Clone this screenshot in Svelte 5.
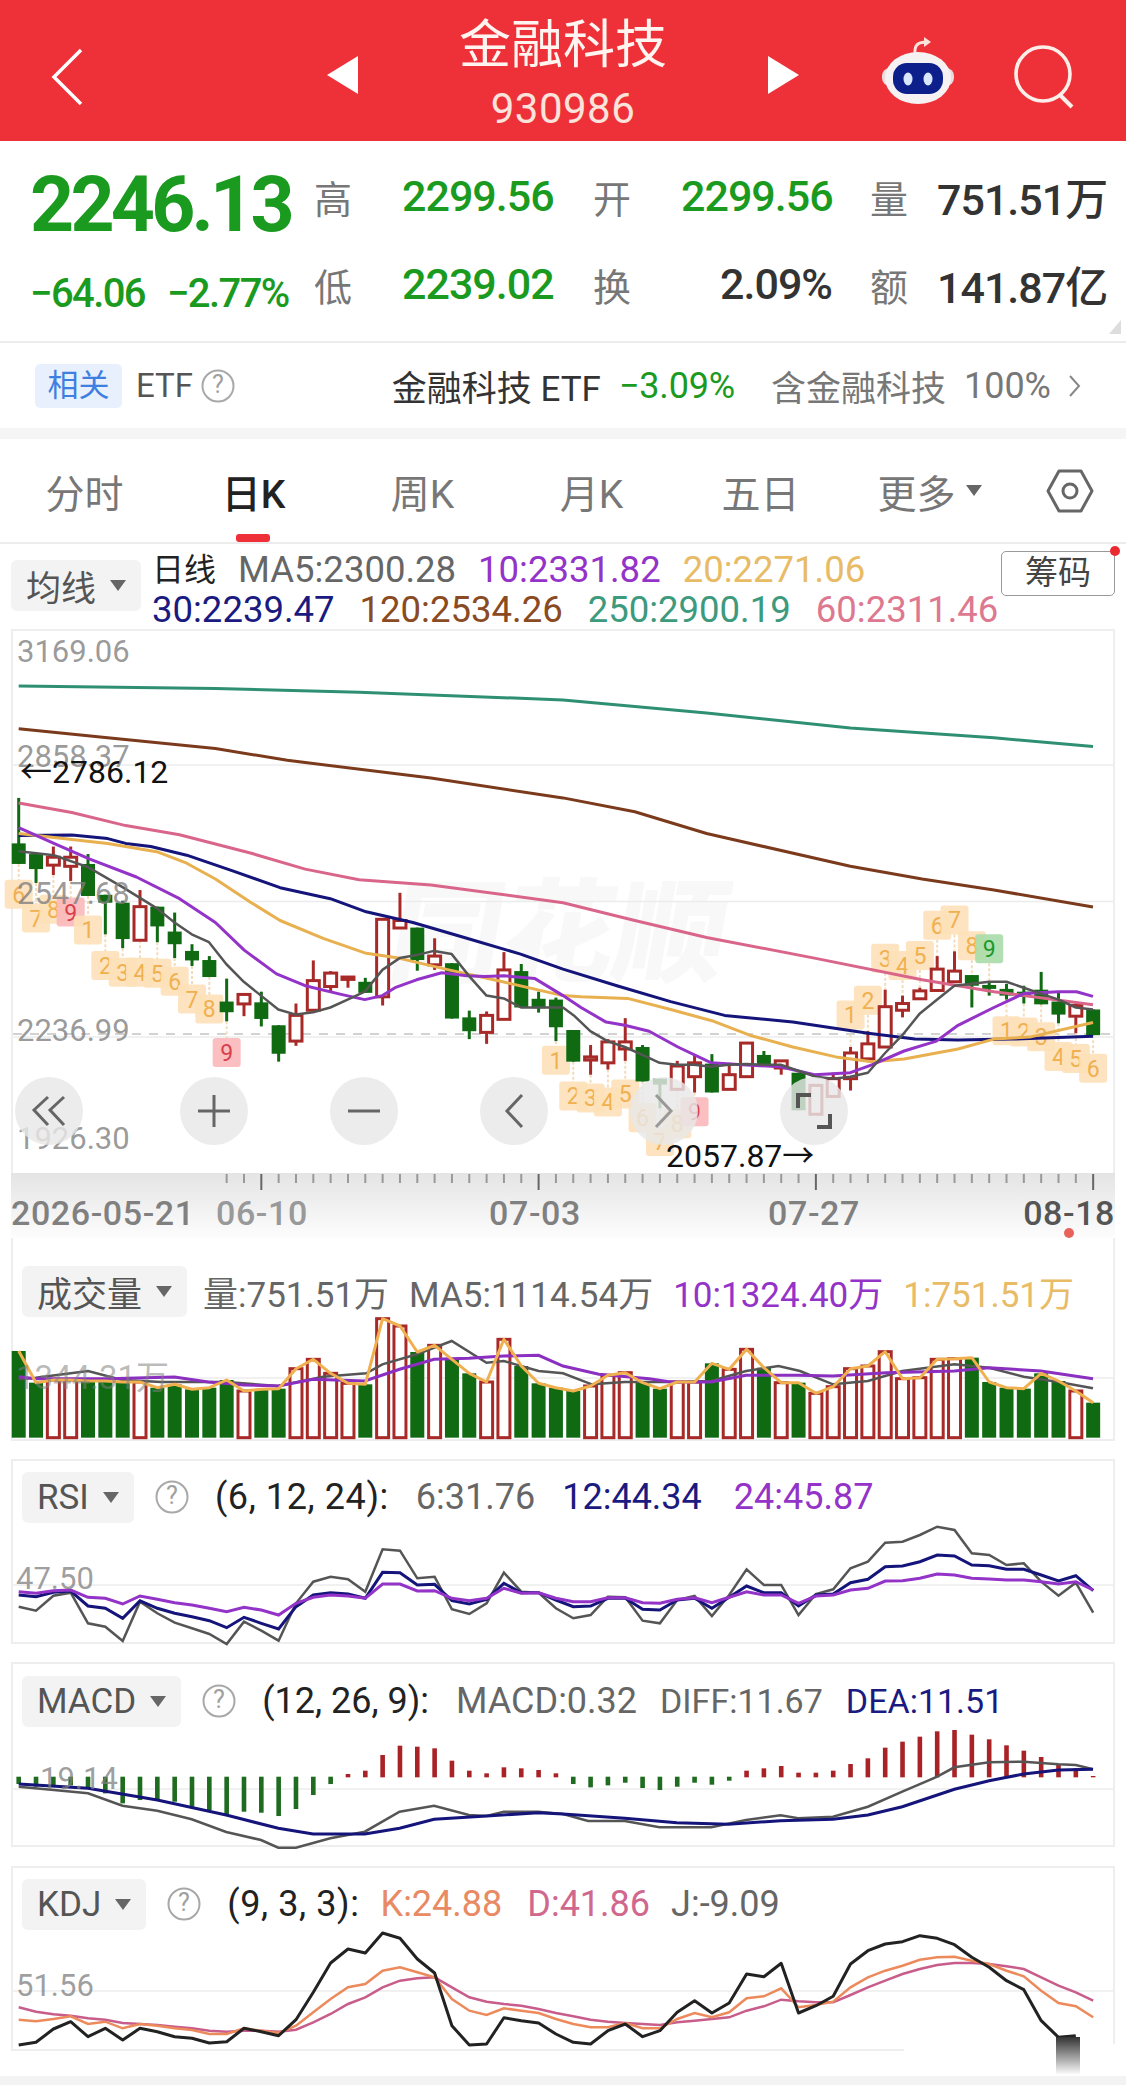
<script>
	// candle: [wick top, body top, body bottom, wick bottom, colour], zoom-crop y units
	const candles = [
		[455, 570, 622, 622, 'g'], [595, 597, 635, 670, 'g'], [578, 605, 625, 650, 'r'], [578, 605, 628, 665, 'r'],
		[597, 622, 703, 703, 'g'], [700, 700, 720, 800, 'g'], [715, 720, 812, 835, 'g'], [688, 730, 815, 815, 'r'],
		[730, 730, 780, 820, 'g'], [745, 793, 825, 860, 'g'], [825, 842, 866, 880, 'g'], [855, 865, 908, 908, 'g'],
		[912, 970, 997, 1020, 'g'], [952, 952, 976, 1007, 'r'], [945, 972, 1014, 1033, 'g'], [1030, 1030, 1102, 1122, 'g'],
		[975, 1005, 1070, 1082, 'r'], [866, 917, 992, 992, 'r'], [893, 898, 932, 945, 'r'], [908, 908, 914, 935, 'r'],
		[910, 920, 948, 948, 'g'], [762, 762, 958, 980, 'r'], [695, 765, 784, 784, 'r'], [783, 783, 865, 892, 'g'],
		[810, 855, 877, 890, 'r'], [873, 873, 1013, 1013, 'g'], [993, 1010, 1045, 1065, 'g'], [995, 1005, 1048, 1077, 'r'],
		[845, 890, 1015, 1015, 'r'], [875, 893, 985, 985, 'g'], [945, 963, 987, 998, 'g'], [960, 965, 1035, 1070, 'g'],
		[1042, 1042, 1122, 1122, 'g'], [1080, 1110, 1118, 1155, 'r'], [1065, 1072, 1125, 1142, 'r'], [1012, 1072, 1090, 1120, 'r'],
		[1080, 1085, 1172, 1172, 'g'], [1165, 1165, 1180, 1240, 'g'], [1120, 1133, 1192, 1192, 'r'], [1105, 1125, 1160, 1200, 'r'],
		[1103, 1127, 1200, 1200, 'g'], [1125, 1155, 1192, 1192, 'r'], [1075, 1075, 1160, 1160, 'r'], [1095, 1105, 1128, 1128, 'g'],
		[1120, 1120, 1138, 1155, 'r'], [1150, 1150, 1245, 1245, 'g'], [1182, 1182, 1255, 1255, 'r'], [1150, 1165, 1210, 1210, 'r'],
		[1085, 1100, 1165, 1195, 'r'], [1045, 1077, 1115, 1115, 'r'], [940, 983, 1085, 1085, 'r'], [955, 975, 992, 1010, 'r'],
		[935, 943, 963, 963, 'r'], [855, 888, 942, 942, 'r'], [843, 893, 920, 920, 'r'], [903, 903, 930, 985, 'g'],
		[920, 928, 938, 955, 'g'], [925, 938, 955, 965, 'g'], [930, 945, 958, 975, 'g'], [895, 940, 977, 977, 'g'],
		[945, 970, 1003, 1025, 'g'], [980, 980, 1007, 1050, 'r'], [990, 990, 1055, 1055, 'g']
	];

	const cx = (i) => 18.7 + 17.33 * i;
	const my = (v) => 620 + v / 2.529;
	const R = 1568; // right-hand crop offset

	const ma = [
		{ c: '#2f8f72', w: 3, p: [[52,172],[600,178],[1000,188],[1568,207],[R+400,240],[R+800,278],[R+1200,303],[R+1476,325]] },
		{ c: '#7c3a1c', w: 3, p: [[52,280],[300,303],[600,330],[800,360],[1200,405],[1568,455],[R+200,490],[R+400,545],[R+800,628],[R+1000,660],[R+1200,688],[R+1476,731]] },
		{ c: '#d9668a', w: 3, p: [[52,468],[200,492],[350,525],[500,548],[700,595],[850,635],[1000,662],[1200,675],[1568,720],[R+200,765],[R+400,808],[R+700,860],[R+1000,915],[R+1200,945],[R+1476,978]] },
		{ c: '#14147a', w: 3, p: [[52,550],[200,549],[300,558],[350,570],[420,578],[520,600],[650,640],[780,682],[920,710],[1020,743],[1150,770],[1300,810],[1450,850],[1568,888],[R+150,930],[R+300,970],[R+450,1005],[R+640,1022],[R+850,1050],[R+980,1065],[R+1100,1067],[R+1250,1065],[R+1476,1058]] },
		{ c: '#e8b04f', w: 3, p: [[52,545],[200,560],[300,570],[440,592],[520,620],[600,660],[700,720],[780,765],[900,810],[1020,848],[1110,860],[1250,890],[1400,920],[1568,955],[R+50,958],[R+180,962],[R+300,990],[R+420,1020],[R+520,1055],[R+640,1085],[R+760,1110],[R+860,1122],[R+950,1115],[R+1100,1090],[R+1200,1065],[R+1300,1060],[R+1476,1023]] },
		{ c: '#9333c8', w: 3, p: [[52,530],[150,570],[250,610],[380,655],[500,710],[600,770],[680,840],[770,900],[850,930],[950,952],[1016,965],[1065,955],[1100,935],[1160,915],[1230,897],[1300,905],[1350,907],[1403,905],[1490,912],[1568,955],[R+50,985],[R+120,1022],[R+172,1030],[R+240,1045],[R+320,1085],[R+413,1125],[R+500,1130],[R+606,1135],[R+700,1155],[R+800,1150],[R+860,1130],[R+950,1095],[R+1040,1070],[R+1100,1030],[R+1200,985],[R+1283,950],[R+1380,945],[R+1430,945],[R+1476,957]] },
		{ c: '#555555', w: 2.5, p: [[52,590],[150,600],[245,630],[340,680],[438,735],[486,770],[534,800],[582,820],[630,875],[679,920],[727,955],[775,990],[824,1003],[872,997],[920,985],[968,965],[1016,945],[1065,890],[1113,860],[1161,852],[1209,842],[1258,850],[1306,905],[1355,955],[1403,962],[1451,985],[1499,985],[1568,985],[R+30,1005],[R+76,1045],[R+124,1070],[R+172,1085],[R+221,1105],[R+269,1125],[R+317,1130],[R+365,1130],[R+413,1135],[R+461,1130],[R+510,1128],[R+558,1130],[R+606,1130],[R+655,1145],[R+704,1160],[R+752,1165],[R+800,1160],[R+849,1150],[R+897,1100],[R+945,1055],[R+994,1000],[R+1042,965],[R+1090,930],[R+1139,925],[R+1187,920],[R+1235,920],[R+1283,935],[R+1331,950],[R+1380,965],[R+1428,985],[R+1476,990]] }
	];

	// TD sequence tags: [candle, crop y, number, kind]
	const tags = [
		[0,700,'6'],[1,760,'7'],[2,738,'8'],[3,745,'9','red'],[4,790,'1'],[5,880,'2'],[6,897,'3'],[7,897,'4'],[8,900,'5'],[9,920,'6'],[10,965,'7'],[11,990,'8'],[12,1100,'9','red'],
		[31,1120,'1'],[32,1210,'2'],[33,1215,'3'],[34,1225,'4'],[35,1205,'5'],[36,1265,'6'],[37,1325,'7'],[38,1280,'8'],[39,1250,'9','red'],
		[48,1005,'1'],[49,968,'2'],[50,862,'3'],[51,880,'4'],[52,855,'5'],[53,778,'6'],[54,765,'7'],[55,830,'8'],[56,838,'9','grn'],
		[57,1045,'1'],[58,1048,'2'],[59,1060,'3'],[60,1110,'4'],[61,1115,'5'],[62,1140,'6']
	];

	const vol = [285,380,372,372,375,375,378,378,395,385,400,395,372,405,400,398,338,310,352,382,385,188,210,288,268,310,352,378,250,330,382,395,405,390,358,350,380,398,378,378,322,340,280,335,380,380,412,392,338,330,287,368,365,310,308,305,378,395,398,352,375,405,440];
	const volGray = [[52,370],[100,365],[245,345],[340,372],[450,378],[630,378],[775,390],[900,362],[1020,352],[1065,325],[1161,295],[1258,255],[1355,320],[1403,315],[1500,345],[1568,352],[R+80,385],[R+172,378],[R+300,378],[R+413,375],[R+510,345],[R+600,330],[R+660,345],[R+752,385],[R+849,375],[R+945,345],[R+1090,325],[R+1187,335],[R+1283,362],[R+1380,378],[R+1476,397]];
	const volPurple = [[52,362],[100,368],[300,368],[486,363],[580,378],[680,387],[775,390],[872,370],[1016,375],[1113,340],[1209,310],[1306,307],[1403,300],[1500,298],[1568,330],[R+100,355],[R+240,368],[R+300,378],[R+413,378],[R+510,358],[R+655,358],[R+752,360],[R+900,350],[R+1090,345],[R+1187,335],[R+1331,345],[R+1476,368]];

	const rsi6 = [1040,1052,1007,998,1090,1100,1143,1025,1060,1088,1105,1122,1152,1085,1112,1142,1030,965,950,958,995,868,872,955,950,1048,1062,1030,938,995,998,1045,1075,1065,1010,1012,1082,1090,1020,1008,1068,1005,928,975,975,1065,1002,988,925,905,848,845,825,800,810,880,885,915,910,965,1007,968,1058];
	const rsi12 = [1005,1010,997,993,1038,1045,1075,1022,1045,1060,1070,1082,1103,1072,1090,1107,1040,1005,998,1002,1015,937,938,975,973,1022,1032,1018,970,998,998,1020,1040,1038,1015,1015,1048,1050,1020,1015,1045,1012,978,998,998,1038,1005,1002,968,958,920,918,905,885,888,915,917,928,928,945,963,947,992];
	const rsi24 = [995,1000,992,990,1012,1015,1032,1008,1018,1028,1035,1045,1055,1042,1050,1065,1030,1012,1005,1008,1015,972,972,993,992,1015,1022,1015,985,1000,998,1015,1025,1025,1013,1013,1028,1030,1018,1013,1028,1012,995,1005,1005,1030,1008,1005,990,985,963,962,955,942,945,955,957,960,960,965,972,965,990];

	const macdBars = [372,380,378,376,385,400,430,420,420,425,440,450,462,455,458,468,447,405,372,342,332,285,257,260,265,302,332,340,322,325,330,340,372,382,376,368,384,390,380,368,374,362,332,325,318,338,338,332,312,295,263,245,230,214,210,224,238,256,272,291,314,325,348];
	const diff = [[52,380],[150,390],[245,400],[341,437],[438,452],[534,478],[630,516],[727,540],[775,563],[824,563],[920,535],[1016,515],[1113,455],[1209,437],[1306,465],[1355,468],[1403,455],[1499,455],[1568,462],[R+70,483],[R+172,483],[R+269,502],[R+413,502],[R+510,480],[R+606,466],[R+655,475],[R+752,470],[R+849,440],[R+945,395],[R+1042,350],[R+1090,322],[R+1187,307],[R+1283,305],[R+1380,313],[R+1428,315],[R+1476,328]];
	const dea = [[52,372],[245,385],[438,420],[630,465],[775,505],[872,522],[1016,522],[1113,505],[1209,478],[1355,468],[1499,458],[1568,462],[R+172,475],[R+317,488],[R+461,493],[R+606,482],[R+752,478],[R+849,465],[R+945,440],[R+1090,388],[R+1187,362],[R+1283,342],[R+1380,330],[R+1476,328]];

	const kdjJ = [1158,1150,1110,1088,1133,1108,1143,1108,1118,1133,1138,1152,1148,1108,1118,1130,1082,1000,912,870,882,822,838,900,942,1100,1158,1155,1076,1085,1092,1125,1150,1155,1115,1095,1133,1115,1060,1025,1062,1032,945,953,913,1062,1040,1012,915,875,855,848,830,838,857,895,925,965,992,1085,1135,1130];
	const kdjK = [1082,1087,1080,1072,1095,1088,1108,1095,1100,1108,1113,1125,1125,1108,1115,1122,1100,1060,1020,985,975,935,925,940,955,1020,1055,1068,1048,1055,1062,1080,1095,1105,1105,1092,1108,1108,1080,1062,1075,1060,1018,1012,988,1045,1038,1028,985,955,935,920,902,895,893,905,915,935,952,995,1032,1042,1075];
	const kdjD = [1045,1058,1066,1070,1078,1082,1092,1095,1098,1103,1108,1115,1118,1115,1115,1118,1112,1090,1065,1035,1015,985,965,958,955,985,1015,1028,1035,1040,1050,1062,1072,1082,1088,1092,1095,1098,1090,1085,1080,1075,1055,1042,1022,1027,1030,1030,1008,985,965,945,930,918,912,912,915,922,930,955,980,1000,1025];

	// crop [x, y] pairs to svg points
	const pts = (p, top, sy) => p.map(([x, y]) => `${(x / 2.785).toFixed(1)},${(top + y / sy).toFixed(1)}`).join(' ');
	// one value per candle to svg points
	const ser = (a, top) => a.map((v, i) => `${cx(i).toFixed(1)},${(top + v / 3).toFixed(1)}`).join(' ');

	const ticks = Array.from({ length: 51 }, (_, k) => k + 12);
	const bigTicks = [14, 30, 46, 62];
</script>

{#snippet sel(name)}
	<div class="sel">{name}<i class="caret"></i></div>
{/snippet}

{#snippet help()}
	<svg class="help" width="34" height="34" viewBox="0 0 34 34">
		<circle cx="17" cy="17" r="15.5" fill="none" stroke="#a8a8a8" stroke-width="2" />
		<text x="17" y="24" text-anchor="middle">?</text>
	</svg>
{/snippet}

<div class="app">
	<header class="top">
		<svg class="back" width="34" height="58" viewBox="0 0 34 58"><path d="M31 2 L4 29 L31 56" fill="none" stroke="#fff" stroke-width="3.5" /></svg>
		<div class="mid">
			<svg width="32" height="38" viewBox="0 0 32 38"><path d="M31 0 V38 L0 19 Z" fill="#fff" /></svg>
			<div class="name">
				<div class="title">金融科技</div>
				<div class="code">930986</div>
			</div>
			<svg width="32" height="38" viewBox="0 0 32 38"><path d="M1 0 V38 L32 19 Z" fill="#fff" /></svg>
		</div>
		<div class="tools">
			<svg class="bot" width="74" height="68" viewBox="0 0 74 68">
				<path d="M34 18 C33 8 38 6 46 6" fill="none" stroke="#fbe3dc" stroke-width="3" />
				<path d="M43 1 L50 6 L43 11 Z" fill="#fbe3dc" />
				<rect x="1" y="32" width="72" height="18" rx="8" fill="#e9dcdc" />
				<ellipse cx="37" cy="42" rx="33" ry="26" fill="#f6f1f3" />
				<rect x="12" y="27" width="50" height="31" rx="14" fill="#0c1f8a" />
				<ellipse cx="27" cy="43" rx="4.5" ry="6.5" fill="#d9e6ff" />
				<ellipse cx="47" cy="43" rx="4.5" ry="6.5" fill="#d9e6ff" />
			</svg>
			<svg class="find" width="64" height="66" viewBox="0 0 64 66">
				<circle cx="30" cy="30" r="27" fill="none" stroke="#fdeee9" stroke-width="3.6" />
				<path d="M47 51 L59 63" stroke="#fdeee9" stroke-width="4" />
			</svg>
		</div>
	</header>

	<section class="quote">
		<div class="price">2246.13</div>
		<div class="lab">高</div><div class="val up">2299.56</div>
		<div class="lab">开</div><div class="val up">2299.56</div>
		<div class="lab">量</div><div class="val dk">751.51万</div>
		<div class="chg"><span>−64.06</span><span>−2.77%</span></div>
		<div class="lab">低</div><div class="val up">2239.02</div>
		<div class="lab">换</div><div class="val dk rt">2.09%</div>
		<div class="lab">额</div><div class="val dk">141.87亿</div>
		<i class="corner"></i>
	</section>

	<section class="etf">
		<div class="etf-l">
			<span class="chip">相关</span>
			<span class="etf-t">ETF</span>
			{@render help()}
		</div>
		<div class="etf-r">
			<span class="dk2">金融科技 ETF</span>
			<span class="up">−3.09%</span>
			<span class="gr wide">含金融科技</span>
			<span class="gr pct">100%</span>
			<svg width="12" height="24" viewBox="0 0 12 24"><path d="M1 2 L10 12 L1 22" fill="none" stroke="#888" stroke-width="2" /></svg>
		</div>
	</section>

	<nav class="tabs">
		<div class="tab">分时</div>
		<div class="tab on">日K<i class="bar"></i></div>
		<div class="tab">周K</div>
		<div class="tab">月K</div>
		<div class="tab">五日</div>
		<div class="tab">更多<i class="caret big"></i></div>
		<div class="tab">
			<svg width="48" height="44" viewBox="0 0 48 44">
				<path d="M13 2 H35 L46 22 L35 42 H13 L2 22 Z" fill="none" stroke="#666" stroke-width="3" stroke-linejoin="round" />
				<circle cx="24" cy="22" r="7" fill="none" stroke="#666" stroke-width="3" />
			</svg>
		</div>
	</nav>

	<section class="legend">
		{@render sel('均线')}
		<div class="rows">
			<div class="row">
				<span class="blk">日线</span>
				<span class="c5">MA5:2300.28</span>
				<span class="c10">10:2331.82</span>
				<span class="c20">20:2271.06</span>
			</div>
			<div class="row">
				<span class="c30">30:2239.47</span>
				<span class="c120">120:2534.26</span>
				<span class="c250">250:2900.19</span>
				<span class="c60">60:2311.46</span>
			</div>
		</div>
		<div class="chips-btn">筹码<i class="dot"></i></div>
	</section>

	<div class="kline">
		<svg width="1100" height="542" viewBox="13 633 1100 542">
			<text class="wm" x="385" y="975" transform="skewX(-10) translate(172 0)">同花顺</text>
			<line class="grid" x1="13" x2="1113" y1="767" y2="767" />
			<line class="grid" x1="13" x2="1113" y1="903.5" y2="903.5" />
			<line class="grid" x1="13" x2="1113" y1="1039" y2="1039" />
			<line class="last" x1="13" x2="1113" y1="1036" y2="1036" />

			{#each tags as [i, y, n, kind]}
				{@const c = candles[i]}
				{#if my(y) > my(c[3])}
					<line class="stem" x1={cx(i)} x2={cx(i)} y1={my(c[3])} y2={my(y) - 14} />
				{:else if my(y) < my(c[0])}
					<line class="stem" x1={cx(i)} x2={cx(i)} y1={my(y) + 14} y2={my(c[0])} />
				{/if}
				<rect class="tag {kind ?? ''}" x={cx(i) - 14} y={my(y) - 15} width="28" height="29" rx="3" />
				<text class="tagn {kind ?? ''}" x={cx(i)} y={my(y) + 8} text-anchor="middle">{n}</text>
			{/each}

			{#each candles as [wt, bt, bb, wb, col], i}
				<line class="wick {col}" x1={cx(i)} x2={cx(i)} y1={my(wt)} y2={my(wb)} />
				{#if col === 'g'}
					<rect class="bd g" x={cx(i) - 7} y={my(bt)} width="14" height={my(bb) - my(bt)} />
				{:else}
					<rect class="bd r" x={cx(i) - 6} y={my(bt)} width="12" height={my(bb) - my(bt)} />
				{/if}
			{/each}

			{#each ma as m}
				<polyline points={pts(m.p, 620, 2.529)} fill="none" stroke={m.c} stroke-width={m.w} stroke-linejoin="round" />
			{/each}

			<text class="ax" x="17" y="664">3169.06</text>
			<text class="ax" x="17" y="769">2858.37</text>
			<text class="ax" x="17" y="906">2547.68</text>
			<text class="ax" x="17" y="1043">2236.99</text>
			<text class="ax" x="17" y="1151">1926.30</text>
			<text class="ext" x="20" y="785">←2786.12</text>
			<text class="ext" x="666" y="1169">2057.87→</text>
		</svg>
		<div class="ctrls">
			<button class="gap" aria-label="first"><svg width="36" height="32" viewBox="0 0 36 32"><path d="M17 2 L3 15 L17 30 M33 2 L19 15 L33 30" fill="none" stroke="#666" stroke-width="3" /></svg></button>
			<button aria-label="zoom in"><svg width="34" height="34" viewBox="0 0 34 34"><path d="M1 17 H33 M17 1 V33" fill="none" stroke="#666" stroke-width="3" /></svg></button>
			<button aria-label="zoom out"><svg width="34" height="34" viewBox="0 0 34 34"><path d="M1 17 H33" fill="none" stroke="#666" stroke-width="3" /></svg></button>
			<button aria-label="previous"><svg width="20" height="34" viewBox="0 0 20 34"><path d="M18 1 L3 17 L18 33" fill="none" stroke="#666" stroke-width="3" /></svg></button>
			<button aria-label="next"><svg width="20" height="34" viewBox="0 0 20 34"><path d="M2 1 L17 17 L2 33" fill="none" stroke="#999" stroke-width="3" /></svg></button>
			<button aria-label="fullscreen"><svg width="36" height="36" viewBox="0 0 36 36"><path d="M2 15 V2 H15 M34 21 V34 H21" fill="none" stroke="#555" stroke-width="4" /></svg></button>
		</div>
	</div>

	<div class="dates">
		<svg width="1126" height="65" viewBox="0 1175 1126 65">
			<defs>
				<linearGradient id="band" x1="0" x2="0" y1="0" y2="1">
					<stop offset="0" stop-color="#e4e4e4" />
					<stop offset="1" stop-color="#fdfdfd" />
				</linearGradient>
				<linearGradient id="fade" x1="0" x2="0" y1="0" y2="1">
					<stop offset="0" stop-color="#333" />
					<stop offset="1" stop-color="#fff" />
				</linearGradient>
			</defs>
			<rect x="11" y="1175" width="1104" height="65" fill="url(#band)" />
			{#each ticks as k}
				<line class="tick" class:big={bigTicks.includes(k)} x1={cx(k)} x2={cx(k)} y1="1176" y2={bigTicks.includes(k) ? 1192 : 1185} />
			{/each}
			<text class="dt" x="11" y="1227">2026-05-21</text>
			<text class="dt faded" x="216" y="1227">06-10</text>
			<text class="dt" x="535" y="1227" text-anchor="middle">07-03</text>
			<text class="dt" x="814" y="1227" text-anchor="middle">07-27</text>
			<text class="dt dark" x="1115" y="1227" text-anchor="end">08-18</text>
			<circle cx="1069" cy="1235" r="5" fill="#e8625c" />
		</svg>
	</div>

	<section class="panel vol">
		<div class="phead">
			{@render sel('成交量')}
			<span class="c5">量:751.51万</span>
			<span class="c5">MA5:1114.54万</span>
			<span class="c10">10:1324.40万</span>
			<span class="c20">1:751.51万</span>
		</div>
		<svg width="1100" height="121" viewBox="13 1321 1100 121">
			<line class="grid" x1="13" x2="1113" y1="1382" y2="1382" />
			{#each vol as v, i}
				{@const up = candles[i][4] === 'r'}
				{#if up}
					<rect class="bd r" x={cx(i) - 6} y={1260 + v / 3} width="12" height={(545 - v) / 3} />
				{:else}
					<rect class="bd g" x={cx(i) - 7} y={1260 + v / 3} width="14" height={(545 - v) / 3} />
				{/if}
			{/each}
			<polyline points={pts(volGray, 1260, 3)} fill="none" stroke="#555" stroke-width="2.5" />
			<polyline points={pts(volPurple, 1260, 3)} fill="none" stroke="#8a2fc0" stroke-width="3" />
			<polyline points={ser(vol, 1260)} fill="none" stroke="#f0b050" stroke-width="3" stroke-linejoin="round" />
			<text class="ax pale" x="16" y="1393">1344.31万</text>
		</svg>
	</section>

	<section class="panel rsi">
		<div class="phead">
			{@render sel('RSI')}
			{@render help()}
			<span class="blk">(6, 12, 24):</span>
			<span class="c5">6:31.76</span>
			<span class="c30">12:44.34</span>
			<span class="c10 far">24:45.87</span>
		</div>
		<svg width="1100" height="121" viewBox="13 1523 1100 121">
			<line class="grid" x1="13" x2="1113" y1="1585" y2="1585" />
			<polyline points={ser(rsi6, 1260)} fill="none" stroke="#555" stroke-width="2.5" />
			<polyline points={ser(rsi12, 1260)} fill="none" stroke="#14147a" stroke-width="3" />
			<polyline points={ser(rsi24, 1260)} fill="none" stroke="#9333c8" stroke-width="3" />
			<text class="ax small" x="16" y="1589">47.50</text>
		</svg>
	</section>

	<section class="panel macd">
		<div class="phead">
			{@render sel('MACD')}
			{@render help()}
			<span class="blk tight">(12, 26, 9):</span>
			<span class="c5">MACD:0.32</span>
			<span class="c5 thin">DIFF:11.67</span>
			<span class="c30 thin">DEA:11.51</span>
		</div>
		<svg width="1100" height="120" viewBox="13 1727 1100 120">
			<line class="grid" x1="13" x2="1113" y1="1789" y2="1789" />
			{#each macdBars as v, i}
				{#if v > 350}
					<rect x={cx(i) - 2.3} y="1776.7" width="4.6" height={(v - 350) / 3} fill="#1f6b1f" />
				{:else}
					<rect x={cx(i) - 2.3} y={1660 + v / 3} width="4.6" height={(352 - v) / 3} fill="#a82226" />
				{/if}
			{/each}
			<polyline points={pts(diff, 1660, 3)} fill="none" stroke="#555" stroke-width="2.5" />
			<polyline points={pts(dea, 1660, 3)} fill="none" stroke="#14147a" stroke-width="3" />
			<text class="ax small" x="40" y="1789">19.14</text>
		</svg>
	</section>

	<section class="panel kdj">
		<div class="phead">
			{@render sel('KDJ')}
			{@render help()}
			<span class="blk">(9, 3, 3):</span>
			<span class="ck pull">K:24.88</span>
			<span class="cd nudge">D:41.86</span>
			<span class="c5 pull">J:-9.09</span>
		</div>
		<svg width="1100" height="120" viewBox="13 1931 1100 120">
			<line class="grid" x1="13" x2="1113" y1="1992" y2="1992" />
			<text class="ax small" x="16" y="1997">51.56</text>
			<polyline points={ser(kdjD, 1660)} fill="none" stroke="#c85c8a" stroke-width="2.5" />
			<polyline points={ser(kdjK, 1660)} fill="none" stroke="#ec8a5c" stroke-width="2.5" />
			<polyline points={ser(kdjJ, 1660)} fill="none" stroke="#222" stroke-width="3" stroke-linejoin="round" />
			<rect x="904" y="2045" width="212" height="32" fill="#fff" />
			<rect x="1056" y="2038" width="24" height="38" fill="url(#fade)" />
		</svg>
	</section>

	<div class="foot"></div>
</div>

<style>
	:global(body) {
		margin: 0;
		background: #fff;
	}
	.app {
		width: 1126px;
		height: 2087px;
		overflow: hidden;
		font-family: 'Roboto', 'Noto Sans CJK SC', sans-serif;
		color: #333;
		background: #fff;
	}
	i {
		font-style: normal;
	}
	svg {
		display: block;
		overflow: visible;
	}

	.top {
		height: 141px;
		background: #ee3138;
		display: grid;
		grid-template-columns: 1fr 472px 1fr;
		align-items: center;
		color: #fff;
	}
	.back {
		margin: 12px 0 0 50px;
	}
	.mid {
		display: flex;
		align-items: center;
		justify-content: space-between;
		padding-top: 8px;
	}
	.name {
		text-align: center;
		margin-top: -2px;
	}
	.title {
		font-size: 52px;
		line-height: 66px;
		color: #fff4f0;
	}
	.code {
		font-size: 42px;
		line-height: 50px;
		padding-top: 5px;
		letter-spacing: 0.5px;
		color: #fbe3dc;
	}
	.tools {
		display: flex;
		align-items: flex-start;
		justify-content: flex-end;
		gap: 58px;
		padding: 0 49px 0 0;
	}
	.bot {
		margin-top: 4px;
	}
	.find {
		margin-top: 12px;
	}

	.quote {
		position: relative;
		height: 202px;
		box-sizing: border-box;
		padding-top: 11px;
		border-bottom: 2px solid #ececec;
		display: grid;
		grid-template-columns: 282px 88px 191px 88px 189px 67px 1fr;
		grid-template-rows: 88px 88px;
		align-items: center;
		padding-left: 32px;
	}
	.price {
		font-size: 77px;
		font-weight: 700;
		letter-spacing: -3.8px;
		color: #1a9a1e;
		margin-left: -2px;
		padding-top: 18px;
		line-height: 72px;
	}
	.chg {
		display: flex;
		gap: 22px;
		font-size: 40px;
		font-weight: 500;
		letter-spacing: -1.6px;
		color: #1a9a1e;
		margin-left: -2px;
		padding-top: 18px;
	}
	.lab {
		font-size: 38px;
		color: #777;
	}
	.val {
		font-size: 43px;
		font-weight: 500;
		letter-spacing: -1px;
	}
	.up {
		color: #1a9a1e;
	}
	.dk {
		color: #333;
	}
	.rt {
		width: 151px;
		text-align: right;
	}
	.corner {
		position: absolute;
		right: 5px;
		bottom: 7px;
		width: 0;
		height: 0;
		border-left: 12px solid transparent;
		border-bottom: 14px solid #ddd;
	}

	.etf {
		height: 85px;
		display: flex;
		align-items: center;
		justify-content: space-between;
		padding: 0 45px 0 35px;
		box-sizing: border-box;
		font-size: 35px;
	}
	.etf-l,
	.etf-r {
		display: flex;
		align-items: center;
	}
	.chip {
		width: 87px;
		height: 44px;
		line-height: 44px;
		text-align: center;
		border-radius: 5px;
		background: #e9f0fd;
		color: #3f7fe0;
		font-size: 31px;
	}
	.etf-t {
		margin: 0 8px 0 14px;
		color: #555;
		font-size: 33px;
	}
	.etf-r {
		gap: 18px;
	}
	.dk2 {
		color: #333;
	}
	.gr {
		color: #777;
	}
	.gr.wide {
		margin-left: 18px;
	}
	.gr.pct {
		font-size: 36px;
	}
	.etf .up {
		font-size: 36px;
		letter-spacing: -0.2px;
	}

	.tabs {
		height: 116px;
		box-sizing: border-box;
		border-top: 11px solid #f5f5f5;
		border-bottom: 2px solid #ececec;
		display: grid;
		grid-template-columns: repeat(6, 169px) 112px;
	}
	.tab {
		position: relative;
		display: flex;
		align-items: center;
		justify-content: center;
		font-size: 39px;
		color: #777;
	}
	.tab.on {
		color: #222;
		font-weight: 500;
	}
	.bar {
		position: absolute;
		left: 67px;
		bottom: 0;
		width: 34px;
		height: 8px;
		border-radius: 3px;
		background: #ee3138;
	}

	.caret {
		display: inline-block;
		margin-left: 14px;
		border-left: 8px solid transparent;
		border-right: 8px solid transparent;
		border-top: 11px solid #666;
	}
	.caret.big {
		margin-left: 10px;
	}

	.legend {
		position: relative;
		height: 85px;
		display: flex;
		padding-left: 11px;
	}
	.sel {
		display: flex;
		align-items: center;
		justify-content: center;
		flex: none;
		box-sizing: border-box;
		height: 51px;
		padding: 0 15px;
		background: #f3f3f3;
		border-radius: 6px;
		color: #555;
		font-size: 35px;
	}
	.legend .sel {
		margin-top: 16px;
		width: 130px;
		padding: 0;
	}
	.rows {
		margin-left: 11px;
		display: flex;
		flex-direction: column;
		padding-top: 6px;
	}
	.row {
		display: flex;
		gap: 22px;
		height: 40px;
		line-height: 40px;
		font-size: 36.5px;
		white-space: nowrap;
	}
	.row + .row {
		gap: 25px;
	}
	.row .blk {
		font-size: 32px;
		letter-spacing: 0;
	}
	.blk {
		color: #222;
		letter-spacing: 0.6px;
	}
	.blk.tight {
		letter-spacing: 0;
	}
	.c5 {
		color: #666;
	}
	.c10 {
		color: #9333c8;
	}
	.c20 {
		color: #e8bb66;
	}
	.c30 {
		color: #1a1a80;
	}
	.c120 {
		color: #8a4a22;
	}
	.c250 {
		color: #3d9a7c;
	}
	.c60 {
		color: #dd7890;
	}
	.ck {
		color: #e88a64;
	}
	.cd {
		color: #d0688e;
	}
	.chips-btn {
		position: absolute;
		left: 1001px;
		top: 7px;
		box-sizing: border-box;
		width: 114px;
		height: 45px;
		line-height: 41px;
		text-align: center;
		border: 1.5px solid #999;
		border-radius: 5px;
		color: #444;
		font-size: 33px;
	}
	.dot {
		position: absolute;
		right: -6px;
		top: -6px;
		width: 10px;
		height: 10px;
		border-radius: 50%;
		background: #ea2a30;
	}

	.kline {
		position: relative;
		margin: 0 11px;
		height: 544px;
		box-sizing: border-box;
		border: 2px solid #eee;
		border-bottom: 0;
	}
	.grid {
		stroke: #ececec;
		stroke-width: 1.5;
	}
	.last {
		stroke: #c4c4c4;
		stroke-width: 1.5;
		stroke-dasharray: 9 8;
	}
	.wm {
		font-size: 112px;
		font-weight: 900;
		fill: #f8f8f8;
	}
	.wick {
		stroke-width: 3;
	}
	.wick.g {
		stroke: #0f6a12;
	}
	.wick.r {
		stroke: #a82a28;
	}
	.bd.g {
		fill: #0f6a12;
	}
	.bd.r {
		fill: #fff;
		stroke: #a82a28;
		stroke-width: 3;
	}
	.stem {
		stroke: #f3dcbc;
		stroke-width: 2;
		stroke-dasharray: 3 2;
	}
	.tag {
		fill: #fde0b8;
		fill-opacity: 0.9;
	}
	.tag.red {
		fill: #fbb8ba;
	}
	.tag.grn {
		fill: #a8dca8;
	}
	.tagn {
		font-size: 23px;
		fill: #f0b050;
	}
	.tagn.red {
		fill: #d8404a;
	}
	.tagn.grn {
		fill: #1a9a2a;
	}
	.ax {
		font-size: 31px;
		fill: #7f7f7f;
		fill-opacity: 0.8;
	}
	.ax.pale {
		font-size: 33px;
		fill-opacity: 0.55;
	}
	.ax.small {
		font-size: 31px;
		fill-opacity: 0.75;
	}
	.ext {
		font-size: 32px;
		fill: #111;
	}

	.ctrls {
		position: absolute;
		left: 2px;
		top: 446px;
		width: 833px;
		display: flex;
		justify-content: space-between;
	}
	.ctrls button {
		width: 68px;
		height: 68px;
		padding: 0;
		border: 0;
		border-radius: 50%;
		background: rgba(232, 232, 232, 0.82);
		display: flex;
		align-items: center;
		justify-content: center;
	}
	.ctrls .gap {
		margin-right: 15px;
	}

	.dates {
		height: 65px;
	}
	.tick {
		stroke: #999;
		stroke-width: 2;
	}
	.tick.big {
		stroke: #666;
	}
	.dt {
		font-size: 34px;
		font-weight: 500;
		letter-spacing: 0.6px;
		fill: #808080;
	}
	.dt.dark {
		fill: #555;
	}
	.dt.faded {
		fill: #999;
	}

	.panel {
		margin: 0 11px;
		box-sizing: border-box;
		border: 2px solid #eee;
	}
	.phead {
		display: flex;
		align-items: center;
		height: 52px;
		margin-left: 9px;
		gap: 27px;
		font-size: 36px;
		white-space: nowrap;
	}
	.far {
		margin-left: 5px;
	}
	.thin {
		font-size: 34px;
		margin-left: -4px;
	}
	.pull {
		margin-left: -6px;
	}
	.nudge {
		margin-left: -2px;
	}
	.help {
		flex: none;
	}
	.help text {
		font-size: 25px;
		fill: #a0a0a0;
	}
	.phead .help {
		margin-left: -6px;
		margin-right: -1px;
	}
	.vol {
		height: 203px;
		padding-top: 27px;
		border-top: 0;
	}
	.vol .phead {
		gap: 20px;
		font-size: 35px;
	}
	.vol .sel {
		margin-right: -4px;
	}
	.rsi {
		margin-top: 18px;
		height: 185px;
		padding-top: 10px;
	}
	.macd {
		margin-top: 18px;
		height: 185px;
		padding-top: 11px;
	}
	.kdj {
		margin-top: 19px;
		height: 185px;
		padding-top: 10px;
	}
	.foot {
		margin-top: 25px;
		height: 9px;
		background: #f3f3f3;
	}
</style>
